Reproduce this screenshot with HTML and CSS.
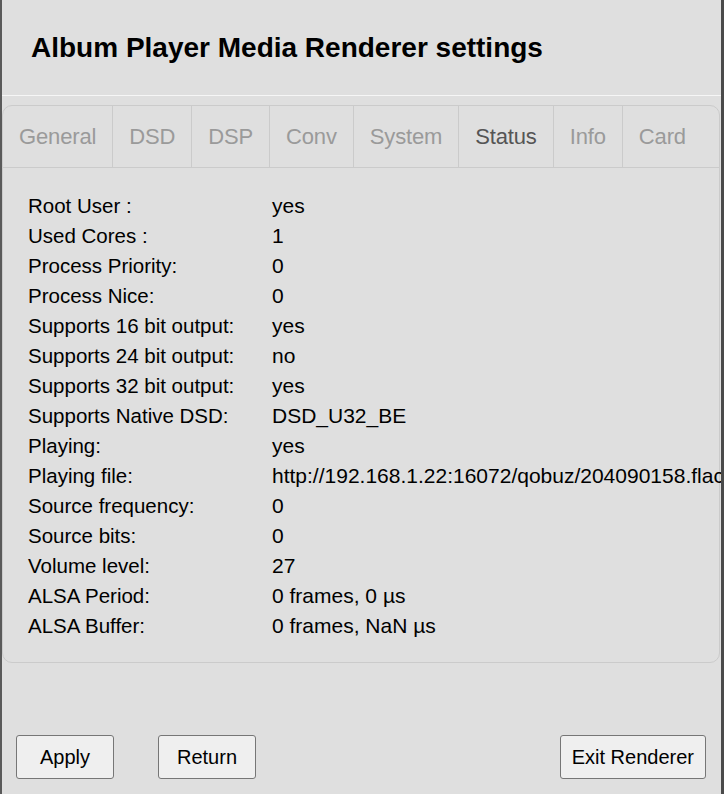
FILE: index.html
```html
<!DOCTYPE html>
<html>
<head>
<meta charset="utf-8">
<link rel="stylesheet" href="styles.css">
</head>
<body>
<div class="dialog">
  <div class="header"><h1 class="title">Album Player Media Renderer settings</h1></div>
  <div class="panel">
    <div class="tabs">
      <div class="tab">General</div>
      <div class="tab">DSD</div>
      <div class="tab">DSP</div>
      <div class="tab">Conv</div>
      <div class="tab">System</div>
      <div class="tab active">Status</div>
      <div class="tab">Info</div>
      <div class="tab last">Card</div>
    </div>
    <div class="content">
      <div class="label">Root User :</div><div class="value">yes</div>
      <div class="label">Used Cores :</div><div class="value">1</div>
      <div class="label">Process Priority:</div><div class="value">0</div>
      <div class="label">Process Nice:</div><div class="value">0</div>
      <div class="label">Supports 16 bit output:</div><div class="value">yes</div>
      <div class="label">Supports 24 bit output:</div><div class="value">no</div>
      <div class="label">Supports 32 bit output:</div><div class="value">yes</div>
      <div class="label">Supports Native DSD:</div><div class="value">DSD_U32_BE</div>
      <div class="label">Playing:</div><div class="value">yes</div>
      <div class="label">Playing file:</div><div class="value">http://192.168.1.22:16072/qobuz/204090158.flac</div>
      <div class="label">Source frequency:</div><div class="value">0</div>
      <div class="label">Source bits:</div><div class="value">0</div>
      <div class="label">Volume level:</div><div class="value">27</div>
      <div class="label">ALSA Period:</div><div class="value">0 frames, 0 µs</div>
      <div class="label">ALSA Buffer:</div><div class="value">0 frames, NaN µs</div>
    </div>
  </div>
  <div class="footer">
    <button class="btn">Apply</button>
    <button class="btn btn-return">Return</button>
    <button class="btn btn-exit">Exit Renderer</button>
  </div>
</div>
</body>
</html>
```
FILE: styles.css
```css
html, body {
  margin: 0;
  padding: 0;
  background: #dfdfdf;
  font-family: "Liberation Sans", Arial, sans-serif;
}
.dialog {
  box-sizing: border-box;
  width: 724px;
  height: 794px;
  border-left: 2px solid #5a5a5a;
  border-right: 3px solid #4a4a4a;
  overflow: hidden;
  display: flex;
  flex-direction: column;
}
.header {
  height: 96px;
  box-sizing: border-box;
  border-bottom: 1px solid #f6f6f6;
  display: flex;
  align-items: center;
  padding-left: 29px;
  flex-shrink: 0;
}
.title {
  margin: 0;
  font-size: 28px;
  font-weight: bold;
  color: #000;
}
.panel {
  margin-top: 9px;
  border: 1px solid #cbcbcb;
  border-radius: 10px;
  margin-right: 1px;
}
.tabs {
  display: flex;
  border-bottom: 1px solid #cbcbcb;
}
.tab {
  padding: 0 16px;
  line-height: 61px;
  font-size: 22px;
  letter-spacing: -0.15px;
  color: #9a9a9a;
  border-right: 1px solid #cbcbcb;
}
.tab.active {
  color: #555;
}
.tab.last {
  border-right: none;
}
.content {
  display: grid;
  grid-template-columns: 244px auto;
  grid-auto-rows: 30px;
  padding: 23px 0 21px 25px;
  font-size: 20.5px;
  color: #000;
  align-items: center;
}
.value {
  white-space: nowrap;
  font-size: 21px;
}
.footer {
  display: flex;
  margin-top: 72px;
  padding: 0 15px 0 14px;
}
.btn {
  box-sizing: border-box;
  min-width: 98px;
  height: 44px;
  padding: 0 11px;
  font-family: "Liberation Sans", Arial, sans-serif;
  font-size: 20px;
  color: #000;
  background: #efefef;
  border: 1px solid #767676;
  border-radius: 3px;
}
.btn-return {
  margin-left: 44px;
}
.btn-exit {
  margin-left: auto;
}
```
